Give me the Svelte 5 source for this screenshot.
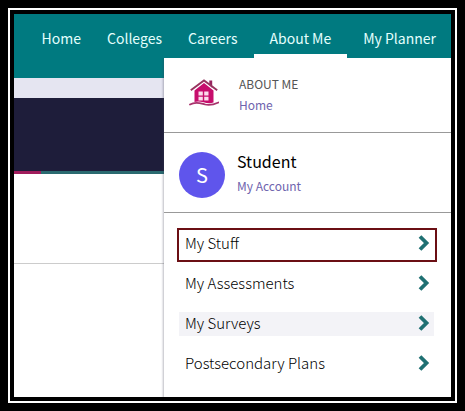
<script>
  const tabs = ['Home', 'Colleges', 'Careers', 'About Me', 'My Planner'];
  const active = 'About Me';
  const items = [
    { label: 'My Stuff', kind: 'marked' },
    { label: 'My Assessments', kind: '' },
    { label: 'My Surveys', kind: 'hovered' },
    { label: 'Postsecondary Plans', kind: '' },
  ];
</script>

<div class="mat">
  <div class="frame">
    <div class="screen">
      <header>
        <nav class="tabs" aria-label="Main">
          {#each tabs as tab}
            <a href="#top" class:active={tab === active}>{tab}</a>
          {/each}
        </nav>
      </header>
      <div class="strip"></div>
      <div class="hero"></div>
      <div class="progress"><span></span></div>
      <div class="body"></div>

      <aside class="menu">
        <section class="intro">
          <svg viewBox="0 0 30 28" width="30" height="28" aria-hidden="true">
            <path d="M5.500 11.500 15 4 24.500 11.500V23.500Q20 25 14.500 23.200 9 22 5.500 23Z" fill="#c70d6c" />
            <path d="M20.300 6V1.500H23.200V9Z" fill="#97245f" />
            <path d="M1.800 11.300 15 1.500 28.200 11.300" fill="none" stroke="#97345f" stroke-width="1.900" />
            <path d="M1 25.500C7 22 12 24.500 16 25.500S25 25.500 29.500 23.500" fill="none" stroke="#a8326c" stroke-width="1.800" stroke-linecap="round" />
            <path d="M9.500 12.500h4.300v4h-4.300zM15.200 12.500h4.300v4h-4.300zM9.500 17.800h4.300v3.700h-4.300zM15.200 17.800h4.300v3.700h-4.300z" fill="#fbdcec" />
          </svg>
          <div class="words">
            <h2>ABOUT ME</h2>
            <a href="#home">Home</a>
          </div>
        </section>

        <section class="account">
          <span class="avatar">S</span>
          <div class="words">
            <h3>Student</h3>
            <a href="#account">My Account</a>
          </div>
        </section>

        <ul>
          {#each items as item}
            <li class={item.kind}>
              <a href="#item">
                {item.label}
                <svg viewBox="0 0 12 16" width="12" height="16" aria-hidden="true">
                  <path d="M2 1.500 8.500 8 2 14.500" fill="none" stroke="#1f7072" stroke-width="3.800" />
                </svg>
              </a>
            </li>
          {/each}
        </ul>
      </aside>
    </div>
  </div>
</div>

<style>
  .mat {
    box-sizing: border-box;
    min-height: 100vh;
    padding: 8px;
    display: flex;
    background: #000;
    font-family: 'Noto Sans CJK SC', 'Noto Sans', sans-serif;
    font-size: 14px;
    line-height: 24px;
  }
  .frame {
    flex: 1;
    display: flex;
    border: 2px solid #fff;
    padding: 4px;
  }
  .screen {
    position: relative;
    flex: 1;
    display: flex;
    flex-direction: column;
    background: #fff;
  }
  a {
    color: inherit;
    text-decoration: none;
  }
  header {
    height: 64px;
    background: #007a80;
  }
  .tabs {
    display: flex;
    justify-content: flex-end;
    height: 44px;
    padding-right: 2px;
    color: #e4fffd;
  }
  .tabs a {
    box-sizing: border-box;
    padding: 12px 13px 4px;
    white-space: nowrap;
  }
  .tabs a.active {
    margin: 0 3px;
    padding: 12px 16px 4px;
    border-bottom: 4px solid #fff;
  }
  .strip {
    height: 20px;
    background: #e5e5f1;
  }
  .hero {
    height: 73px;
    background: #1e1d3a;
  }
  .progress {
    height: 3px;
    background: #2a6a70;
  }
  .progress span {
    display: block;
    width: 27px;
    height: 3px;
    background: #a01c5c;
  }
  .body {
    height: 89px;
    border-bottom: 1px solid #ccc;
  }
  .menu {
    position: absolute;
    inset: 44px 0 0 150px;
    background: #fff;
    box-shadow: -1px 1px 2px rgba(60, 60, 80, 0.35);
    clip-path: inset(0 0 0 -4px);
  }
  section {
    display: flex;
    box-sizing: border-box;
    border-bottom: 1px solid #999;
  }
  .intro {
    height: 75px;
    padding: 21px 0 0 25px;
    gap: 20px;
  }
  .account {
    height: 80px;
    padding: 19px 0 0 15px;
    gap: 12px;
  }
  .words {
    display: flex;
    flex-direction: column;
    gap: 4px;
  }
  h2,
  h3 {
    margin: 0;
    font-weight: 400;
  }
  h2 {
    font-size: 12px;
    line-height: 10px;
    color: #555;
  }
  .words a {
    font-size: 12px;
    line-height: 24px;
    color: #6f64ae;
  }
  h3 {
    font-size: 16px;
    line-height: 18px;
    color: #000;
  }
  .avatar {
    width: 46px;
    height: 46px;
    border-radius: 50%;
    background: #5f55ec;
    color: #fff;
    font-size: 20px;
    line-height: 46px;
    text-align: center;
  }
  ul {
    list-style: none;
    margin: 0;
    padding: 19px 17px 0 15px;
    display: flex;
    flex-direction: column;
    gap: 16px;
  }
  li a {
    display: flex;
    align-items: center;
    justify-content: space-between;
    padding: 0 4px 2px 6px;
    color: #000;
    font-size: 15px;
    font-weight: 300;
    line-height: 22px;
  }
  .hovered {
    background: #f3f3f7;
  }
  .marked {
    margin: -4px -3px -6px -2px;
    padding: 2px 1px 4px 0;
    border: 2px solid #6b0f14;
  }
</style>
